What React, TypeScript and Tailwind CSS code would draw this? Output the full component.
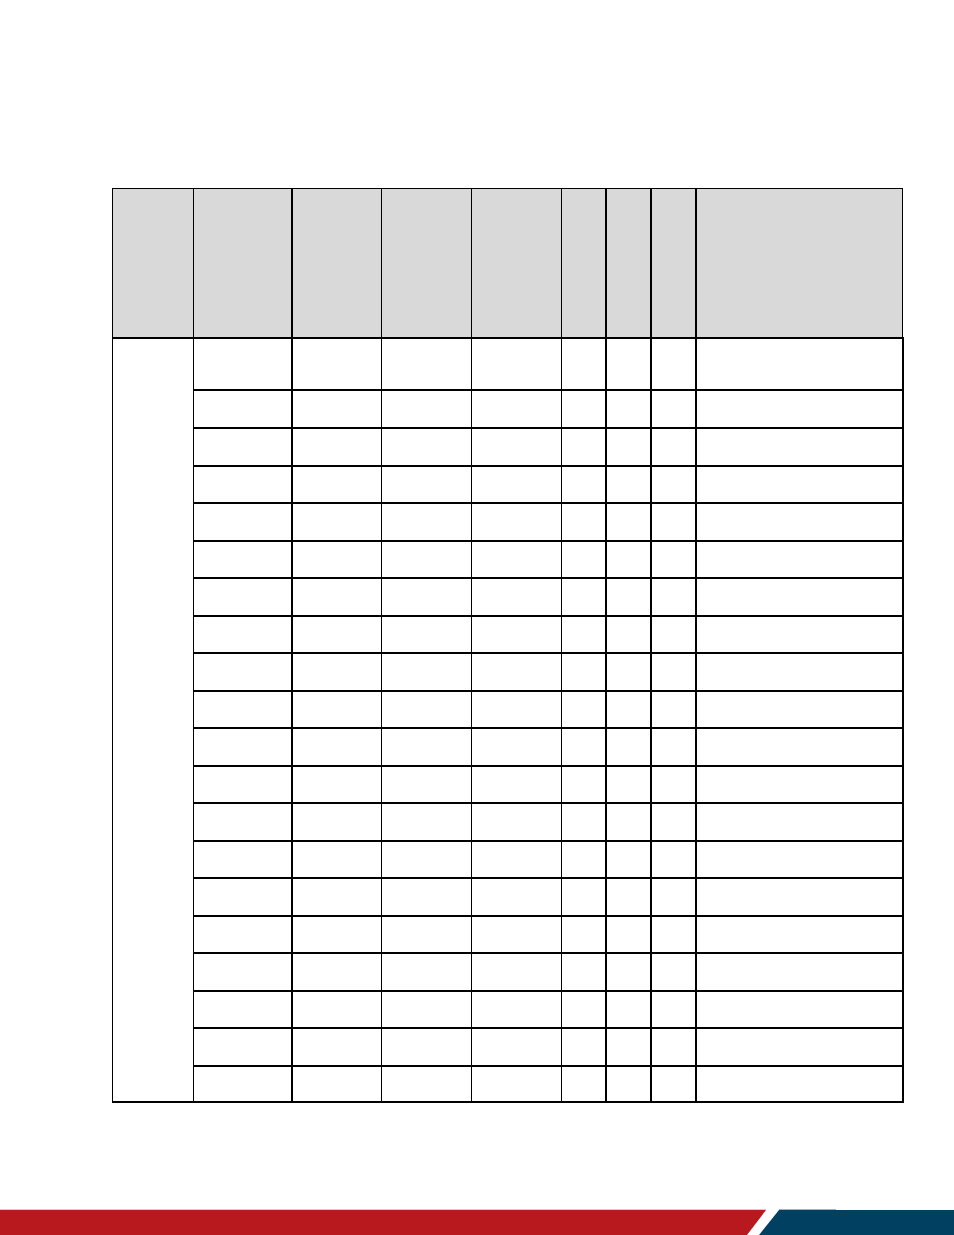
const colWidths = [81, 98, 90, 90, 90, 44, 45, 45, 207];

// which vertical lines (left edge of each column after the first) are heavy
const heavyLeft = [false, false, true, false, false, false, true, true, true];

const rowHeights = [52, 38, 38, 37, 38, 37, 38, 37, 38, 37, 38, 37, 38, 37, 38, 37, 38, 37, 38, 36];

function cellBorder(col: number) {
  return heavyLeft[col] ? "border-l-2" : "border-l";
}

export default function App() {
  return (
    <div className="flex h-[1235px] w-[954px] flex-col bg-white font-['Liberation_Sans',sans-serif]">
      <div className="flex-1 pl-[112px] pt-[188px]">
        <table className="w-[791px] table-fixed border-collapse">
          <colgroup>
            {colWidths.map((w, i) => (
              <col key={i} style={{ width: w }} />
            ))}
          </colgroup>
          <thead>
            <tr className="h-[149px] bg-[#d9d9d9]">
              {colWidths.map((_, i) => (
                <th
                  key={i}
                  className={`border-t border-b-2 border-r border-black ${cellBorder(i)}`}
                />
              ))}
            </tr>
          </thead>
          <tbody>
            {rowHeights.map((h, r) => (
              <tr key={r} style={{ height: h }}>
                {r === 0 && (
                  <td
                    rowSpan={rowHeights.length}
                    className="border-l border-b-2 border-r border-black"
                  />
                )}
                {colWidths.slice(1).map((_, c) => (
                  <td
                    key={c}
                    className={`border-b-2 border-black ${cellBorder(c + 1)} ${
                      c === colWidths.length - 2 ? "border-r-2" : ""
                    }`}
                  />
                ))}
              </tr>
            ))}
          </tbody>
        </table>
      </div>
      <footer className="h-[26px] w-full">
        <svg width="954" height="26" viewBox="0 0 954 26" className="block">
          <rect x="0" y="0" width="766" height="1" fill="#e3c6c7" />
          <polygon points="0,1 766,1 747,26 0,26" fill="#b8191f" />
          <polygon points="779,1 954,1 954,26 759,26" fill="#024062" />
          <rect x="779" y="0" width="57" height="1" fill="#9db6c6" />
        </svg>
      </footer>
    </div>
  );
}
